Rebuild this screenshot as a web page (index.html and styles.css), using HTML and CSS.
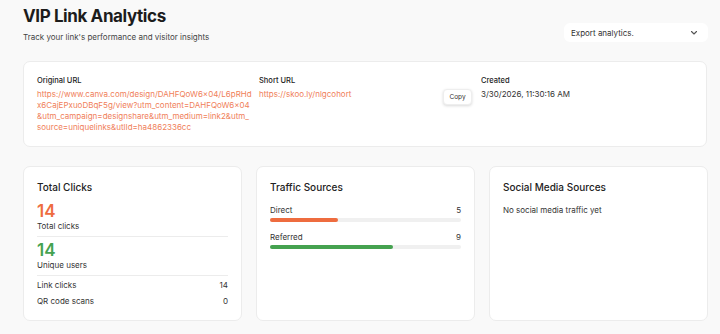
FILE: index.html
```html
<!DOCTYPE html>
<html lang="en">
<head>
  <meta charset="UTF-8">
  <title>VIP Link Analytics</title>
  <link rel="stylesheet" href="styles.css">
</head>
<body>

<div class="page">
  <!-- header -->
  <div class="header">
    <div>
      <h1 class="title">VIP Link Analytics</h1>
      <p class="subtitle">Track your link's performance and visitor insights</p>
    </div>
    <div class="export">
      <span>Export analytics.</span>
      <svg width="10" height="10" viewBox="0 0 10 10"><path d="M2.5 3.5 L5 6 L7.5 3.5" fill="none" stroke="#555" stroke-width="1.1" stroke-linecap="round" stroke-linejoin="round"/></svg>
    </div>
  </div>

  <!-- link info -->
  <div class="card link-card">
    <div class="col">
      <div class="label">Original URL</div>
      <div class="url">
        <span>https://www.canva.com/design/DAHFQoW6×04/L6pRHd</span>
        <span>x6CajEPxuoDBqF5g/view?utm_content=DAHFQoW6×04</span>
        <span>&amp;utm_campaign=designshare&amp;utm_medium=link2&amp;utm_</span>
        <span>source=uniquelinks&amp;utlId=ha4862336cc</span>
      </div>
    </div>
    <div class="col short-col">
      <div>
        <div class="label">Short URL</div>
        <div class="url">https://skoo.ly/nlgcohort</div>
      </div>
      <button class="copy-btn">Copy</button>
    </div>
    <div class="col">
      <div class="label">Created</div>
      <div class="date">3/30/2026, 11:30:16 AM</div>
    </div>
  </div>

  <!-- stats -->
  <div class="stats">
    <div class="card stat-card">
      <h2 class="card-title">Total Clicks</h2>
      <div class="big orange">14</div>
      <div class="small">Total clicks</div>
      <div class="divider"></div>
      <div class="big green">14</div>
      <div class="small">Unique users</div>
      <div class="divider"></div>
      <div class="row"><span>Link clicks</span><span>14</span></div>
      <div class="row"><span>QR code scans</span><span>0</span></div>
    </div>

    <div class="card stat-card">
      <h2 class="card-title">Traffic Sources</h2>
      <div class="source">
        <div class="row"><span>Direct</span><span>5</span></div>
        <div class="bar"><div class="fill orange-bg" style="width: 35.7%"></div></div>
      </div>
      <div class="source">
        <div class="row"><span>Referred</span><span>9</span></div>
        <div class="bar"><div class="fill green-bg" style="width: 64.3%"></div></div>
      </div>
    </div>

    <div class="card stat-card">
      <h2 class="card-title">Social Media Sources</h2>
      <div class="empty">No social media traffic yet</div>
    </div>
  </div>
</div>

</body>
</html>
```

FILE: styles.css
```css
body {
  margin: 0;
  background-color: #f9f9f9;
  font-family: Inter, "Noto Sans", sans-serif;
  color: #222;
}

.page {
  padding: 6px 12px 0 23px;
}

.header {
  display: flex;
  justify-content: space-between;
  align-items: flex-start;
}

.title {
  margin: 0;
  font-size: 17px;
  font-weight: 700;
  letter-spacing: -0.4px;
  color: #1c1c1c;
  line-height: 20px;
}

.subtitle {
  margin: 6px 0 0;
  font-size: 8px;
  line-height: 10px;
  color: #444;
}

.export {
  margin-top: 17px;
  width: 144px;
  height: 19px;
  padding: 0 9px 0 7px;
  box-sizing: border-box;
  background-color: white;
  border-radius: 6px;
  display: flex;
  align-items: center;
  justify-content: space-between;
  font-size: 8px;
  color: #333;
}

.card {
  background-color: white;
  border: 1px solid #ececec;
  border-radius: 7px;
  box-sizing: border-box;
}

.link-card {
  margin-top: 19px;
  margin-right: 1px;
  height: 86px;
  padding: 13px 13px;
  display: grid;
  grid-template-columns: 212px 212px 1fr;
  column-gap: 10px;
}

.label {
  font-size: 7.5px;
  line-height: 11px;
  font-weight: 500;
  color: #222;
  margin-bottom: 3px;
}

.url {
  font-size: 8px;
  line-height: 11px;
  color: #f0805a;
}

.url span {
  display: block;
  white-space: nowrap;
}

.short-col {
  display: flex;
  justify-content: space-between;
  align-items: flex-start;
}

.copy-btn {
  margin-top: 14px;
  margin-right: -1px;
  width: 29px;
  height: 16px;
  padding: 0;
  font-family: inherit;
  font-size: 6.5px;
  background-color: white;
  border: 1px solid #eee;
  border-radius: 4px;
  box-shadow: 0 1px 3px rgba(0,0,0,0.15);
  color: #333;
}

.date {
  font-size: 8px;
  line-height: 11px;
  color: #333;
}

.stats {
  margin-top: 19px;
  display: grid;
  grid-template-columns: repeat(3, 1fr);
  gap: 14px;
}

.stat-card {
  height: 155px;
  padding: 13px 13px;
}

.card-title {
  margin: 0 0 8px;
  font-size: 10px;
  font-weight: 500;
  color: #222;
  line-height: 14px;
}

.big {
  font-size: 17px;
  font-weight: 600;
  line-height: 18px;
}

.orange { color: #ee6c3f; }
.green { color: #45a250; }
.orange-bg { background-color: #ee6c3f; }
.green-bg { background-color: #45a250; }

.small {
  font-size: 8px;
  color: #333;
  line-height: 10px;
  margin-top: 1px;
}

.empty {
  font-size: 8px;
  color: #333;
  line-height: 16px;
}

.divider {
  height: 1px;
  background-color: #ececec;
  margin: 5px 0 4px;
}

.small + .divider + .row {
  margin-top: -3px;
}

.row {
  display: flex;
  justify-content: space-between;
  font-size: 8px;
  color: #333;
  line-height: 16px;
}

.source {
  margin-bottom: 7px;
}

.bar {
  height: 4px;
  border-radius: 2px;
  background-color: #f0f0f0;
}

.fill {
  height: 100%;
  border-radius: 2px;
}
```
